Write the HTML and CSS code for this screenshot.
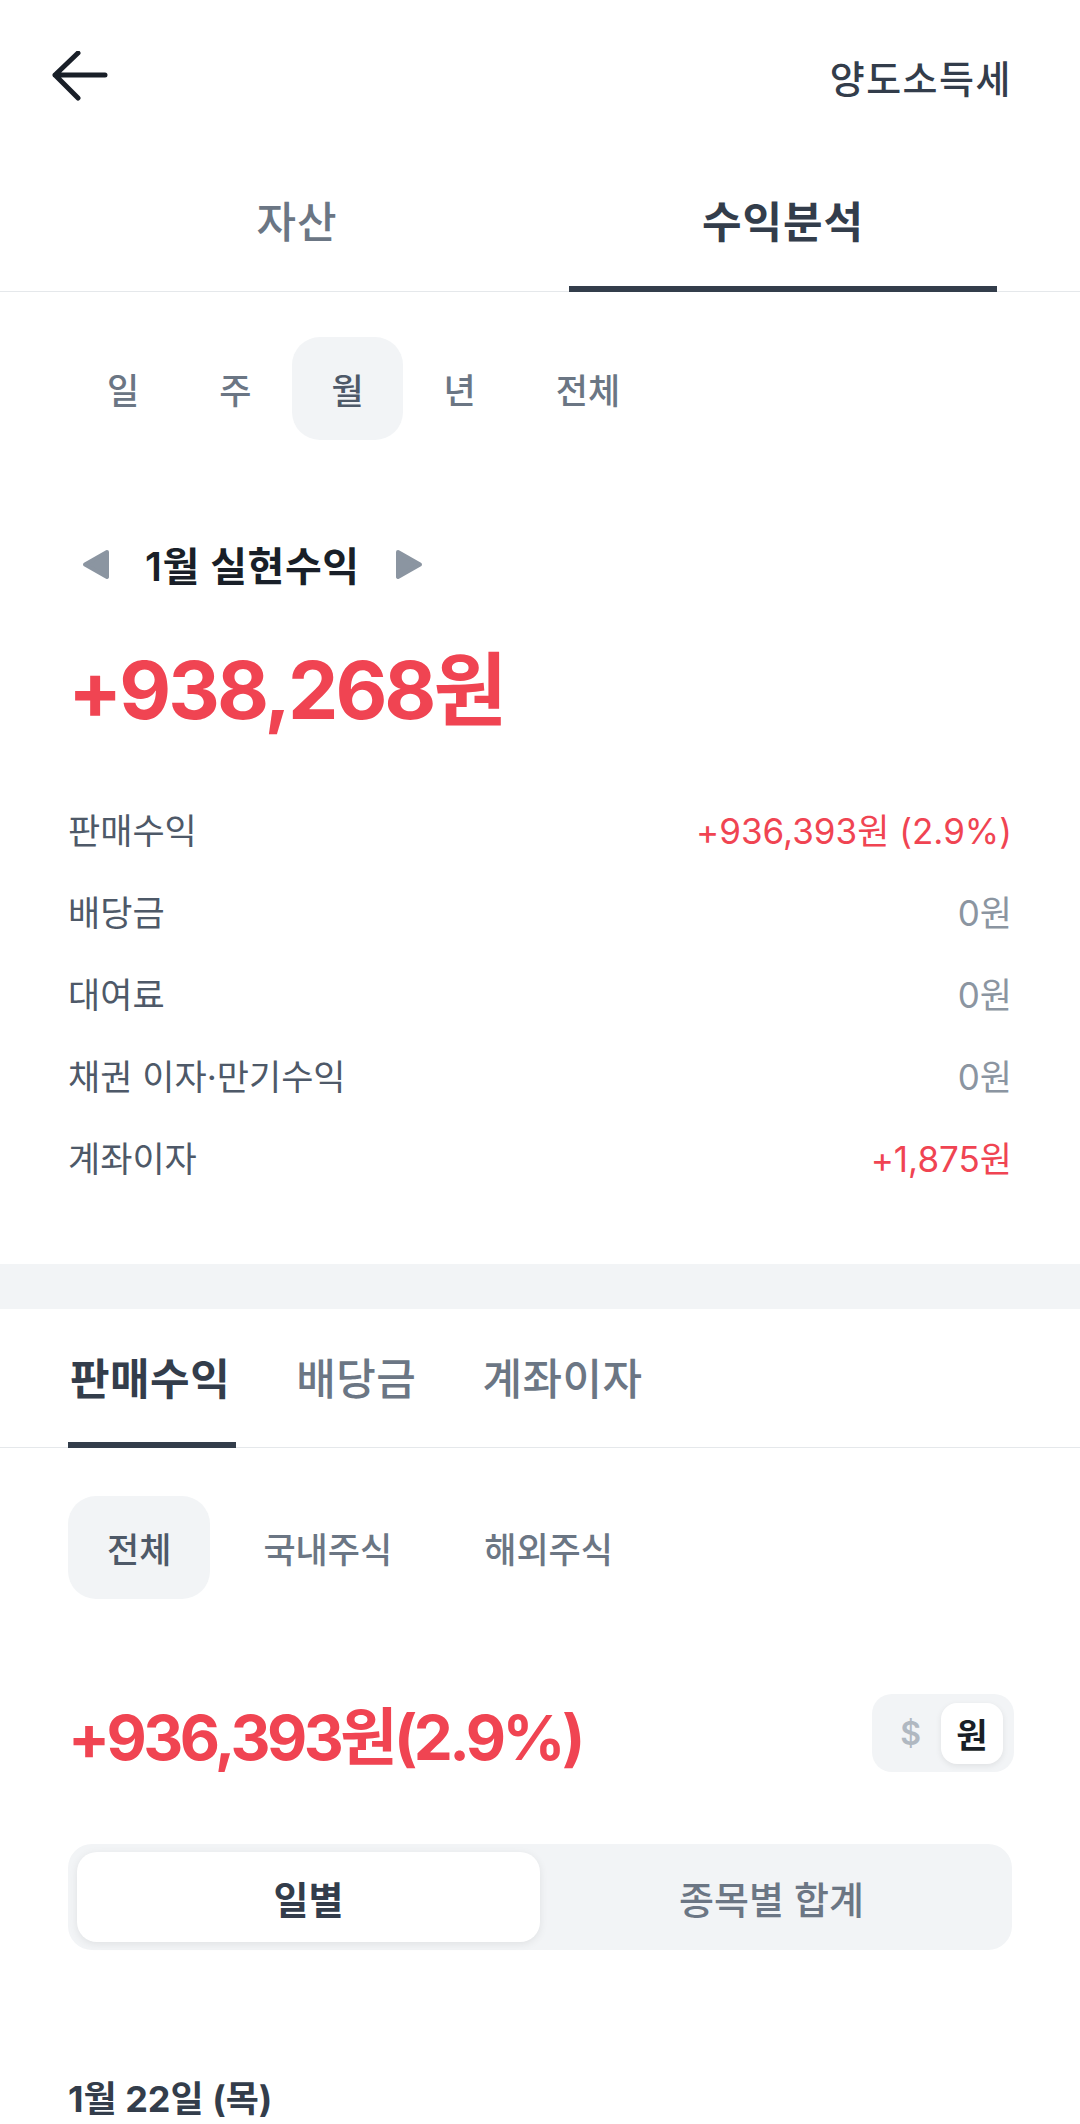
FILE: index.html
```html
<!DOCTYPE html>
<html>

<head>
    <title>수익분석</title>
    <link rel="stylesheet" href="styles.css">
</head>

<body>
    <div id="app">
        <div class="header">
            <svg class="back" width="56" height="50" viewBox="0 0 56 50">
                <path d="M3 24 H53 M26 2 L3 24 L26 47" fill="none" stroke="#191f28" stroke-width="5" stroke-linecap="round" stroke-linejoin="round" />
            </svg>
            <div class="header-title">양도소득세</div>
        </div>

        <div class="top-tabs">
            <div class="top-tab">자산</div>
            <div class="top-tab active">수익분석</div>
        </div>

        <div class="chips period">
            <div class="chip">일</div>
            <div class="chip">주</div>
            <div class="chip active">월</div>
            <div class="chip">년</div>
            <div class="chip">전체</div>
        </div>

        <div class="month">
            <svg class="arrow" width="31" height="33" viewBox="0 0 31 33">
                <polygon points="27,4 5,16.5 27,29" fill="#8b95a1" stroke="#8b95a1" stroke-width="4" stroke-linejoin="round" />
            </svg>
            <div class="month-title">1월 실현수익</div>
            <svg class="arrow" width="31" height="33" viewBox="0 0 31 33">
                <polygon points="4,4 26,16.5 4,29" fill="#8b95a1" stroke="#8b95a1" stroke-width="4" stroke-linejoin="round" />
            </svg>
        </div>

        <div class="total">+938,268원</div>

        <div class="breakdown">
            <div class="row">
                <span class="row-label">판매수익</span>
                <span class="row-value plus">+936,393원 (2.9%)</span>
            </div>
            <div class="row">
                <span class="row-label">배당금</span>
                <span class="row-value">0원</span>
            </div>
            <div class="row">
                <span class="row-label">대여료</span>
                <span class="row-value">0원</span>
            </div>
            <div class="row">
                <span class="row-label">채권 이자·만기수익</span>
                <span class="row-value">0원</span>
            </div>
            <div class="row">
                <span class="row-label">계좌이자</span>
                <span class="row-value plus">+1,875원</span>
            </div>
        </div>

        <div class="divider"></div>

        <div class="sub-tabs">
            <div class="sub-tab active">판매수익</div>
            <div class="sub-tab">배당금</div>
            <div class="sub-tab">계좌이자</div>
        </div>

        <div class="chips market">
            <div class="chip active">전체</div>
            <div class="chip">국내주식</div>
            <div class="chip">해외주식</div>
        </div>

        <div class="summary">
            <div class="summary-value">+936,393원(2.9%)</div>
            <div class="currency">
                <span class="dollar">$</span>
                <span class="won">원</span>
            </div>
        </div>

        <div class="segment">
            <div class="segment-item active">일별</div>
            <div class="segment-item">종목별 합계</div>
        </div>

        <div class="date">1월 22일 (목)</div>
    </div>
</body>

</html>
```

FILE: styles.css
```css
body {
    margin: 0;
    background-color: #fff;
    font-family: Inter, "Noto Sans CJK KR", sans-serif;
    color: #191f28;
}

#app {
    width: 1080px;
}

.header {
    height: 152px;
    display: flex;
    align-items: center;
    justify-content: space-between;
    padding: 0 68px 0 52px;
}

.header-title {
    font-size: 38px;
    font-weight: 500;
    letter-spacing: 1.5px;
    color: #333d4b;
}

.top-tabs {
    display: flex;
    padding: 0 54px;
    border-bottom: 1px solid #e5e8eb;
}

.top-tab {
    flex: 1;
    margin: 0 29px -1px;
    height: 134px;
    display: flex;
    align-items: center;
    justify-content: center;
    font-size: 43px;
    font-weight: 500;
    letter-spacing: 1px;
    color: #6b7684;
    border-bottom: 6px solid transparent;
}

.top-tab.active {
    font-weight: 700;
    color: #333d4b;
    border-bottom-color: #333d4b;
}

.chips {
    display: flex;
    padding: 0 68px;
}

.period {
    gap: 2px;
    margin-top: 45px;
}

.market {
    gap: 14px;
    margin-top: 48px;
}

.chip {
    height: 103px;
    padding: 0 39px;
    display: flex;
    align-items: center;
    font-size: 35px;
    font-weight: 500;
    color: #6b7684;
    border-radius: 28px;
}

.chip.active {
    background-color: #f2f4f6;
    color: #4e5968;
}

.month {
    display: flex;
    align-items: center;
    height: 60px;
    margin-top: 94px;
    padding: 0 80px;
}

.month-title {
    margin: 0 34px;
    font-size: 40px;
    font-weight: 600;
    letter-spacing: 0.5px;
    color: #191f28;
}

.total {
    margin-top: 48px;
    padding: 0 68px;
    font-size: 80px;
    line-height: 96px;
    font-weight: 700;
    letter-spacing: -3px;
    color: #f04452;
}

.breakdown {
    padding: 49px 68px 67px;
}

.row {
    display: flex;
    justify-content: space-between;
    align-items: center;
    height: 82px;
    font-size: 35px;
}

.row-label {
    color: #4e5968;
}

.row-value {
    color: #8b95a1;
}

.row-value.plus {
    color: #f04452;
}

.divider {
    height: 45px;
    background-color: #f2f4f6;
}

.sub-tabs {
    display: flex;
    gap: 58px;
    padding: 0 68px;
    border-bottom: 1px solid #e5e8eb;
}

.sub-tab {
    height: 133px;
    margin-bottom: -1px;
    padding: 0 6px 0 2px;
    display: flex;
    align-items: center;
    font-size: 43px;
    font-weight: 500;
    letter-spacing: 0.5px;
    color: #6b7684;
    border-bottom: 6px solid transparent;
}

.sub-tab.active {
    font-weight: 700;
    color: #333d4b;
    border-bottom-color: #333d4b;
}

.summary {
    display: flex;
    justify-content: space-between;
    align-items: center;
    height: 80px;
    margin-top: 94px;
    padding: 0 66px 0 68px;
}

.summary-value {
    font-size: 62px;
    font-weight: 700;
    letter-spacing: -3.5px;
    color: #f04452;
}

.currency {
    display: flex;
    align-items: center;
    height: 78px;
    padding: 0 11px 0 28px;
    gap: 20px;
    background-color: #f2f4f6;
    border-radius: 20px;
}

.dollar {
    font-size: 32px;
    font-weight: 600;
    color: #b0b8c1;
}

.won {
    width: 62px;
    height: 61px;
    display: flex;
    align-items: center;
    justify-content: center;
    background-color: #fff;
    border-radius: 16px;
    box-shadow: 0 2px 6px rgba(0, 0, 0, 0.08);
    font-size: 34px;
    font-weight: 700;
    color: #191f28;
}

.segment {
    display: flex;
    margin: 71px 68px 0;
    padding: 8px 9px;
    background-color: #f2f4f6;
    border-radius: 24px;
}

.segment-item {
    flex: 1;
    height: 90px;
    display: flex;
    align-items: center;
    justify-content: center;
    font-size: 38px;
    font-weight: 500;
    color: #6b7684;
    border-radius: 20px;
}

.segment-item.active {
    background-color: #fff;
    font-weight: 700;
    color: #333d4b;
    box-shadow: 0 2px 8px rgba(0, 0, 0, 0.08);
}

.date {
    margin-top: 124px;
    padding: 0 68px;
    font-size: 36px;
    line-height: 50px;
    font-weight: 700;
    color: #333d4b;
}
```
